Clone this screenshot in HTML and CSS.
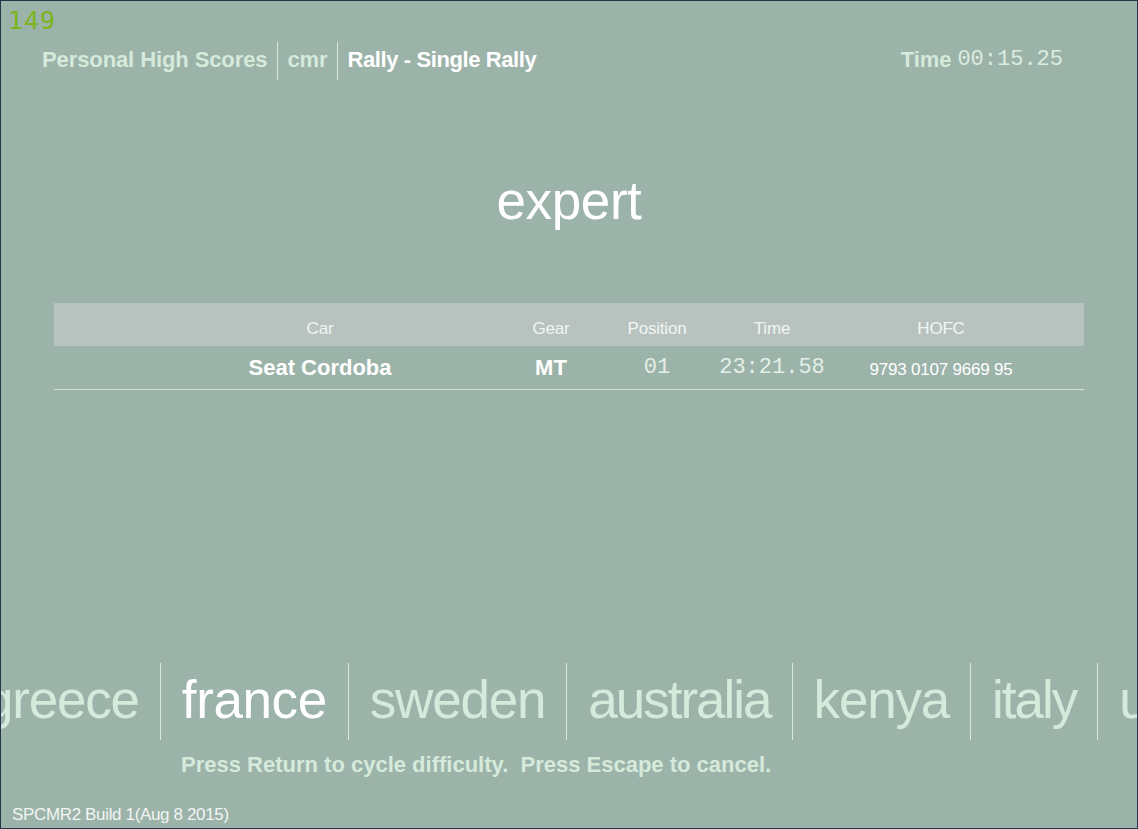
FILE: index.html
```html
<!DOCTYPE html>
<html lang="en">
<head>
    <meta charset="UTF-8">
    <title>Personal High Scores</title>
    <link rel="stylesheet" href="styles.css">
</head>
<body>
    <div class="screen">
        <div class="fps">149</div>

        <div class="topbar">
            <div class="crumbs">
                <span class="crumb">Personal High Scores</span>
                <span class="crumb">cmr</span>
                <span class="crumb current">Rally - Single Rally</span>
            </div>
            <div class="clock">
                <span class="clock-label">Time</span>
                <span class="digits">00:15.25</span>
            </div>
        </div>

        <h1 class="difficulty">expert</h1>

        <div class="scores">
            <div class="row head">
                <span>Car</span>
                <span>Gear</span>
                <span>Position</span>
                <span>Time</span>
                <span>HOFC</span>
            </div>
            <div class="row entry">
                <span class="car">Seat Cordoba</span>
                <span class="gear">MT</span>
                <span class="digits">01</span>
                <span class="digits">23:21.58</span>
                <span class="hofc">9793 0107 9669 95</span>
            </div>
        </div>

        <div class="rallies">
            <div class="rally-track">
                <span class="rally">greece</span>
                <span class="rally active">france</span>
                <span class="rally">sweden</span>
                <span class="rally narrow">australia</span>
                <span class="rally">kenya</span>
                <span class="rally narrow">italy</span>
                <span class="rally">usa</span>
            </div>
        </div>

        <p class="hint">Press Return to cycle difficulty.&nbsp; Press Escape to cancel.</p>

        <div class="build">SPCMR2 Build 1(Aug 8 2015)</div>
    </div>
</body>
</html>
```

FILE: styles.css
```css
html, body {
    margin: 0;
    padding: 0;
}

body {
    font-family: 'Liberation Sans', Arial, sans-serif;
    background: #1f3043;
}

.screen {
    width: 1138px;
    height: 829px;
    box-sizing: border-box;
    border: 1px solid #23364b;
    background: #9cb3aa;
    display: flex;
    flex-direction: column;
    overflow: hidden;
    color: #d6eadb;
}

/* frame counter, top left */
.fps {
    font-family: 'DejaVu Sans Mono', monospace;
    color: #7ab51b;
    font-size: 25px;
    line-height: 22px;
    height: 22px;
    margin: 9px 0 0 7px;
    letter-spacing: 1px;
}

.topbar {
    display: flex;
    justify-content: space-between;
    align-items: center;
    padding: 0 74px 0 41px;
    margin-top: 10px;
    height: 38px;
}

.crumbs {
    display: flex;
    align-items: stretch;
    height: 38px;
}

.crumb {
    display: flex;
    align-items: center;
    font-size: 22px;
    font-weight: bold;
    letter-spacing: -0.1px;
    padding: 0 10px 3px 9px;
}

.crumb:first-child {
    padding-left: 0;
}

.crumb + .crumb {
    border-left: 1px solid #d6eadb;
}

.crumb.current {
    color: #ffffff;
    letter-spacing: -0.4px;
}

.clock {
    display: flex;
    align-items: center;
    gap: 6px;
    padding-bottom: 3px;
}

.clock-label {
    font-size: 22px;
    font-weight: bold;
    letter-spacing: -0.1px;
}

.digits {
    font-family: 'Liberation Mono', 'DejaVu Sans Mono', monospace;
    font-size: 22px;
    color: #dcece0;
}

.difficulty {
    margin: 91px 0 0;
    text-align: center;
    font-size: 53px;
    font-weight: normal;
    letter-spacing: -0.4px;
    line-height: 60px;
    color: #ffffff;
}

.scores {
    margin: 72px 53px 0 53px;
}

.row {
    display: grid;
    grid-template-columns: 360px 102px 110px 120px 218px;
    padding: 0 34px 0 86px;
    align-items: center;
    text-align: center;
}

.row.head {
    height: 43px;
    box-sizing: border-box;
    padding-top: 8px;
    background: #b8c3c0;
    color: #f2f5f3;
    font-size: 17px;
    letter-spacing: -0.2px;
}

.row.entry {
    height: 43px;
    border-bottom: 1px solid #d2e6d8;
    color: #ffffff;
}

.car, .gear {
    font-size: 22px;
    font-weight: bold;
    letter-spacing: 0;
}

.entry .digits {
    color: #e4efe7;
}

.hofc {
    font-size: 17px;
    letter-spacing: -0.2px;
    padding-top: 4px;
}

/* rally selector strip, scrolled so the active one sits second */
.rallies {
    margin-top: 273px;
    overflow: hidden;
    height: 77px;
}

.rally-track {
    display: flex;
    height: 77px;
    margin-left: -38px;
}

.rally {
    display: flex;
    align-items: center;
    flex: none;
    padding: 0 21px 4px;
    font-size: 53px;
    letter-spacing: -1.2px;
    color: #d6eadb;
}

.rally.narrow {
    letter-spacing: -2px;
}

.rally + .rally {
    border-left: 1px solid #d6eadb;
}

.rally.active {
    color: #ffffff;
    letter-spacing: -0.4px;
}

.hint {
    margin: 12px 0 0 180px;
    font-size: 22px;
    font-weight: bold;
    letter-spacing: 0;
    line-height: 26px;
}

.build {
    margin: 27px 0 0 11px;
    font-size: 17px;
    letter-spacing: -0.35px;
    color: #f2f5f3;
}
```
